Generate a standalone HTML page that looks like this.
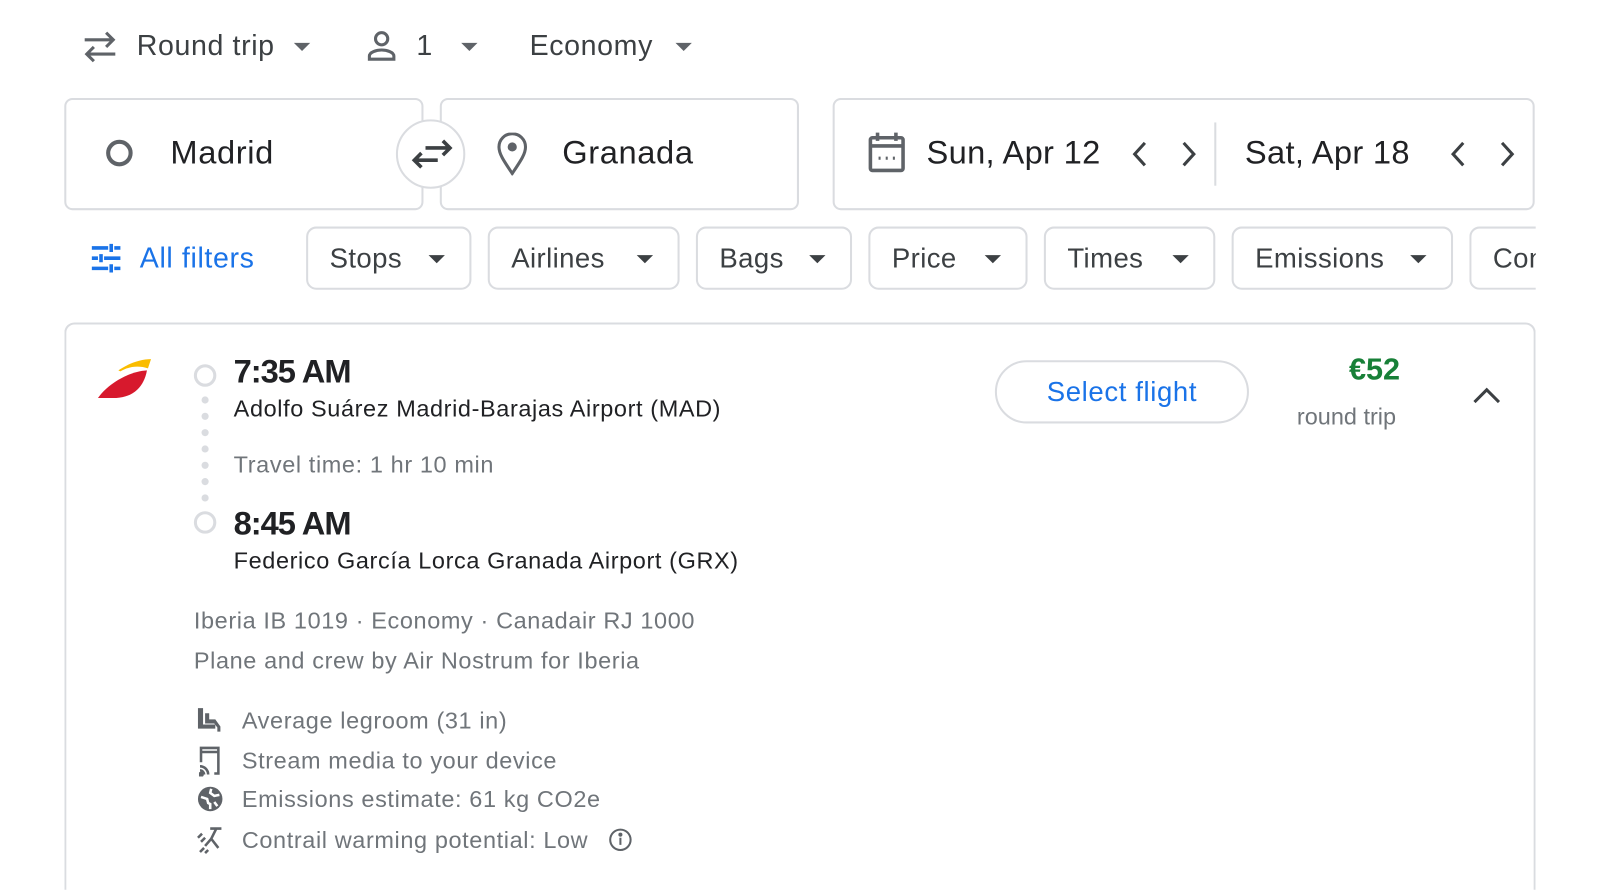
<!DOCTYPE html>
<html style="overflow:hidden;height:890px"><head><style>
body{margin:0;width:1600px;height:890px;overflow:hidden;background:#fff;font-family:"Liberation Sans",Arial,sans-serif;color:#3c4043;position:relative}
#w{position:absolute;left:0;top:0;width:1568px;height:872px;transform:scale(1.0204);transform-origin:0 0;overflow:hidden}
.a{position:absolute;white-space:nowrap}
.box{position:absolute;border:2px solid #dadce0;border-radius:8px;background:#fff;box-sizing:border-box}
.chip{position:absolute;top:222px;height:62px;border:2px solid #dadce0;border-radius:10px;box-sizing:border-box;font-size:27px;color:#3c4043;padding-left:21px;line-height:58px;letter-spacing:0.4px}
.chip:after{content:"";position:absolute;right:24px;top:26px;border-left:8px solid transparent;border-right:8px solid transparent;border-top:8px solid #3c4043}
.tri{position:absolute;border-left:8px solid transparent;border-right:8px solid transparent;border-top:8px solid #5f6368}
.g{color:#70757a}
.s{letter-spacing:0.6px}
</style></head><body><div id="w">
<svg class="a" style="left:80px;top:30px" width="36" height="32" viewBox="0 0 36 32" fill="none" stroke="#5f6368" stroke-width="3"><path d="M3 9h28M24 2l7 7-7 7M33 23H5M12 16l-7 7 7 7"/></svg>
<div class="a s" style="left:134px;top:29px;font-size:28px">Round trip</div>
<div class="tri" style="left:288px;top:42px"></div>
<svg class="a" style="left:358px;top:29px" width="32" height="32" viewBox="0 0 32 32" fill="none" stroke="#5f6368" stroke-width="3"><circle cx="16" cy="9" r="6"/><path d="M4 29v-3c0-4 7-6 12-6s12 2 12 6v3z"/></svg>
<div class="a" style="left:408px;top:29px;font-size:28px">1</div>
<div class="tri" style="left:452px;top:42px"></div>
<div class="a s" style="left:519px;top:29px;font-size:28px">Economy</div>
<div class="tri" style="left:662px;top:42px"></div>

<div class="box" style="left:63px;top:96px;width:352px;height:110px"></div>
<div class="box" style="left:431px;top:96px;width:352px;height:110px"></div>
<div class="a" style="left:388px;top:117px;width:68px;height:68px;border:2px solid #dadce0;border-radius:50%;background:#fff;box-sizing:border-box"></div>
<svg class="a" style="left:401px;top:133px" width="44" height="36" viewBox="0 0 44 36" fill="none" stroke="#3c4043" stroke-width="3.5"><path d="M16 12h24M33 5l7 7-7 7M28 24H5M12 17l-7 7 7 7"/></svg>
<div class="a" style="left:104px;top:137px;width:26px;height:26px;border:4px solid #5f6368;border-radius:50%;box-sizing:border-box"></div>
<div class="a s" style="left:167px;top:131px;font-size:32px;color:#202124">Madrid</div>
<svg class="a" style="left:486px;top:130px" width="32" height="42" viewBox="0 0 32 42" fill="none" stroke="#5f6368" stroke-width="3"><path d="M16 40C8 28 3 21 3 14a13 13 0 0126 0c0 7-5 14-13 26z"/><circle cx="16" cy="14" r="3" fill="#5f6368"/></svg>
<div class="a s" style="left:551px;top:131px;font-size:32px;color:#202124">Granada</div>

<div class="box" style="left:816px;top:96px;width:688px;height:110px"></div>
<div class="a" style="left:1190px;top:120px;width:2px;height:62px;background:#dadce0"></div>
<svg class="a" style="left:850px;top:128px" width="38" height="42" viewBox="0 0 38 42" fill="none" stroke="#5f6368" stroke-width="3.5"><rect x="3" y="7" width="32" height="32" rx="2"/><path d="M3 15h32M10 2v8M28 2v8"/><path d="M11 27h2M18 27h2M25 27h2" stroke-width="3"/></svg>
<div class="a" style="left:908px;top:131px;font-size:32px;color:#202124;letter-spacing:0.3px">Sun, Apr 12</div>
<svg class="a" style="left:1108px;top:138px" width="70" height="26" viewBox="0 0 70 26" fill="none" stroke="#3c4043" stroke-width="3"><path d="M14 2L4 13l10 11M52 2l10 11-10 11"/></svg>
<div class="a" style="left:1220px;top:131px;font-size:32px;color:#202124;letter-spacing:0.3px">Sat, Apr 18</div>
<svg class="a" style="left:1420px;top:138px" width="70" height="26" viewBox="0 0 70 26" fill="none" stroke="#3c4043" stroke-width="3"><path d="M14 2L4 13l10 11M52 2l10 11-10 11"/></svg>

<svg class="a" style="left:89px;top:238px" width="30" height="30" viewBox="0 0 30 30" fill="none" stroke="#1a73e8" stroke-width="3.5"><path d="M1 5h16M23 5h6M20 1v8M1 15h6M13 15h16M10 11v8M1 25h16M23 25h6M20 21v8"/></svg>
<div class="a s" style="left:137px;top:237px;font-size:28px;color:#1a73e8">All filters</div>
<div class="chip" style="left:300px;width:162px">Stops</div>
<div class="chip" style="left:478px;width:188px">Airlines</div>
<div class="chip" style="left:682px;width:153px">Bags</div>
<div class="chip" style="left:851px;width:156px">Price</div>
<div class="chip" style="left:1023px;width:168px">Times</div>
<div class="chip" style="left:1207px;width:217px">Emissions</div>
<div class="a" style="left:1440px;top:222px;width:65px;height:62px;overflow:hidden"><div class="chip" style="left:0;top:0;width:160px">Con</div></div>

<div class="a" style="left:63px;top:316px;width:1442px;height:560px;border:2px solid #dadce0;border-bottom:none;border-radius:10px 10px 0 0;box-sizing:border-box"></div>
<svg class="a" style="left:94px;top:350px" width="56" height="42" viewBox="0 0 56 42"><path d="M22 13C32 6 44 2 54 2l-3 9C42 8 32 9 24 14z" fill="#fabd00"/><path d="M2 40C12 26 32 14 50 13c-2 12-10 26-30 27z" fill="#d7192d"/></svg>
<div class="a" style="left:190px;top:357px;width:22px;height:22px;border:3px solid #dadce0;border-radius:50%;box-sizing:border-box"></div>
<div class="a" style="left:190px;top:501px;width:22px;height:22px;border:3px solid #dadce0;border-radius:50%;box-sizing:border-box"></div>
<svg class="a" style="left:196px;top:386px" width="10" height="110"><g fill="#dadce0"><circle cx="5" cy="6" r="3.5"/><circle cx="5" cy="22" r="3.5"/><circle cx="5" cy="38" r="3.5"/><circle cx="5" cy="54" r="3.5"/><circle cx="5" cy="70" r="3.5"/><circle cx="5" cy="86" r="3.5"/><circle cx="5" cy="102" r="3.5"/></g></svg>
<div class="a" style="left:229px;top:346px;font-size:32px;font-weight:bold;color:#202124;letter-spacing:-1px">7:35 AM</div>
<div class="a s" style="left:229px;top:387px;font-size:23px;color:#202124">Adolfo Suárez Madrid-Barajas Airport (MAD)</div>
<div class="a g s" style="left:229px;top:442px;font-size:23px">Travel time: 1 hr 10 min</div>
<div class="a" style="left:229px;top:495px;font-size:32px;font-weight:bold;color:#202124;letter-spacing:-1px">8:45 AM</div>
<div class="a s" style="left:229px;top:536px;font-size:23px;color:#202124">Federico García Lorca Granada Airport (GRX)</div>
<div class="a g s" style="left:190px;top:595px;font-size:23px">Iberia IB 1019 · Economy · Canadair RJ 1000</div>
<div class="a g s" style="left:190px;top:634px;font-size:23px">Plane and crew by Air Nostrum for Iberia</div>

<div class="a s" style="left:975px;top:353px;width:249px;height:62px;border:2px solid #dadce0;border-radius:31px;box-sizing:border-box;text-align:center;line-height:58px;font-size:27px;color:#1a73e8">Select flight</div>
<div class="a" style="left:1322px;top:346px;font-size:30px;font-weight:bold;color:#188038">€52</div>
<div class="a g" style="left:1271px;top:395px;font-size:23px">round trip</div>
<svg class="a" style="left:1442px;top:378px" width="30" height="20" viewBox="0 0 30 20" fill="none" stroke="#3c4043" stroke-width="3"><path d="M3 16L15 4l12 12"/></svg>

<svg class="a" style="left:193px;top:693px" width="26" height="26" viewBox="0 0 26 26" fill="#5f6368"><path d="M1 1h5v16h12v4H1z"/><path d="M8 6h4v6h6l5 7v5h-3v-4l-3-4H8z"/></svg>
<div class="a g s" style="left:237px;top:693px;font-size:23px">Average legroom (31 in)</div>
<svg class="a" style="left:195px;top:731px" width="22" height="30" viewBox="0 0 22 30" fill="none" stroke="#5f6368" stroke-width="2.5"><path d="M2 16V2h17v25h-4M2 6h17"/><path d="M1 20a8 8 0 018 8M1 24a4 4 0 014 4" /><circle cx="2" cy="28" r="1.5" fill="#5f6368"/></svg>
<div class="a g s" style="left:237px;top:732px;font-size:23px">Stream media to your device</div>
<svg class="a" style="left:193px;top:770px" width="26" height="26" viewBox="0 0 26 26"><circle cx="13" cy="13" r="12" fill="#5f6368"/><path d="M4 11l6 2 1 4 2 1v5M14 3l-1 4 4 3 5-1M17 16l3 4" stroke="#fff" stroke-width="2.5" fill="none"/></svg>
<div class="a g s" style="left:237px;top:770px;font-size:23px">Emissions estimate: 61 kg CO2e</div>
<svg class="a" style="left:192px;top:809px" width="28" height="28" viewBox="0 0 28 28" fill="none" stroke="#5f6368" stroke-width="2.5"><path d="M14 3l11 0M20 3l-5 10 7 9M15 13l-6 7M2 12l4-4M5 16l4-4M4 26l4-4M9 27l3-3"/></svg>
<div class="a g s" style="left:237px;top:810px;font-size:23px">Contrail warming potential: Low</div>
<svg class="a" style="left:596px;top:811px" width="24" height="24" viewBox="0 0 24 24" fill="none" stroke="#5f6368" stroke-width="2"><circle cx="12" cy="12" r="10"/><path d="M12 10v7"/><circle cx="12" cy="7" r="1" fill="#5f6368"/></svg>
</div></body></html>
